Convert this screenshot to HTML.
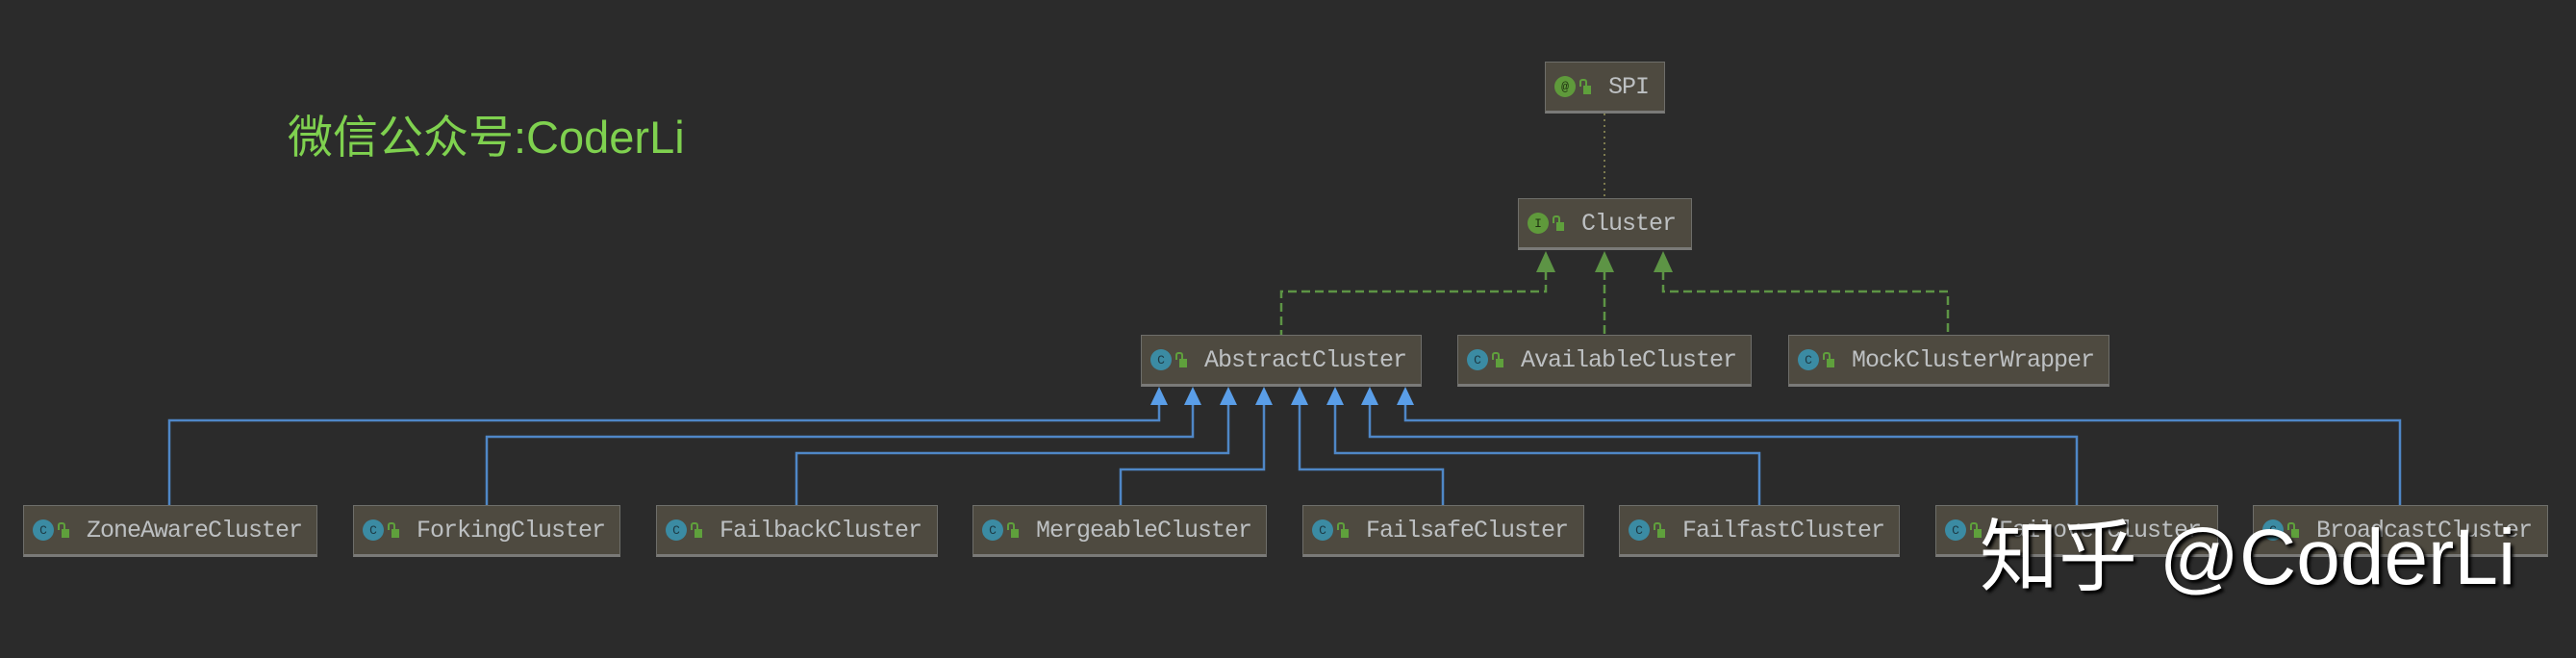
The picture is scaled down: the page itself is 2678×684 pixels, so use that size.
<!DOCTYPE html>
<html><head><meta charset="utf-8"><style>
body{margin:0;width:2678px;height:684px;background:#2b2b2b;position:relative;overflow:hidden;font-family:"Liberation Mono",monospace}
.b{position:absolute;height:51px;background:#4e4a40;border:1px solid #6e6e6a;border-bottom:3px solid #7a7a78;box-sizing:border-box;display:flex;align-items:center;color:#bdc0c2;font-size:25px;letter-spacing:-1px;white-space:nowrap}
.ic{width:22px;height:22px;border-radius:50%;background:#3b8ba3;color:#1d3a45;font-size:13px;letter-spacing:0;display:flex;align-items:center;justify-content:center;margin-left:9px;flex:none}
.gi{background:#5f9a3b;color:#1f3010}
.lk{width:8px;height:9px;background:#5fa03c;margin:6px 18px 0 8px;position:relative;flex:none}
.lk:before{content:"";position:absolute;left:-4px;top:-7px;width:4px;height:6px;border:2px solid #5fa03c;border-bottom:none;border-radius:3px 3px 0 0}
.wm{position:absolute;left:299px;top:104px;font-family:"Liberation Sans","Noto Sans CJK SC",sans-serif;font-size:47px;color:#7fd14f}
.zh{position:absolute;left:2058px;top:512px;font-family:"Liberation Sans","Noto Sans CJK SC",sans-serif;font-size:82px;color:#fff;text-shadow:3px 3px 3px #000;white-space:nowrap}
</style></head><body>
<svg width="2678" height="684" style="position:absolute;left:0;top:0">
<line x1="1668" y1="118" x2="1668" y2="206" stroke="#7c7a4e" stroke-width="2" stroke-dasharray="2,4"/>
<g stroke="#5d9445" stroke-width="2.5" fill="none" stroke-dasharray="9,5">
<polyline points="1607,282 1607,303 1332,303 1332,348"/>
<polyline points="1668,282 1668,348"/>
<polyline points="1729,282 1729,303 2025,303 2025,348"/>
</g>
<g fill="#5d9445">
<polygon points="1607,261 1597,283 1617,283"/>
<polygon points="1668,261 1658,283 1678,283"/>
<polygon points="1729,261 1719,283 1739,283"/>
</g>
<g stroke="#4f87c7" stroke-width="2.5" fill="none">
<polyline points="1205,420 1205,437 176,437 176,525"/>
<polyline points="1240,420 1240,454 506,454 506,525"/>
<polyline points="1277,420 1277,471 828,471 828,525"/>
<polyline points="1314,420 1314,488 1165,488 1165,525"/>
<polyline points="1351,420 1351,488 1500,488 1500,525"/>
<polyline points="1388,420 1388,471 1829,471 1829,525"/>
<polyline points="1424,420 1424,454 2159,454 2159,525"/>
<polyline points="1461,420 1461,437 2495,437 2495,525"/>
</g>
<g fill="#5a9ee8">
<polygon points="1205,402 1196,421 1214,421"/><polygon points="1240,402 1231,421 1249,421"/>
<polygon points="1277,402 1268,421 1286,421"/><polygon points="1314,402 1305,421 1323,421"/>
<polygon points="1351,402 1342,421 1360,421"/><polygon points="1388,402 1379,421 1397,421"/>
<polygon points="1424,402 1415,421 1433,421"/><polygon points="1461,402 1452,421 1470,421"/>
</g>
</svg>
<div class="wm">微信公众号:CoderLi</div>
<div class="b" style="left:1606px;top:64px;width:125px;height:54px"><span class="ic gi">@</span><span class="lk"></span>SPI</div>
<div class="b" style="left:1578px;top:206px;width:181px;height:54px"><span class="ic gi">I</span><span class="lk"></span>Cluster</div>
<div class="b" style="left:1186px;top:348px;width:292px;height:54px"><span class="ic">C</span><span class="lk"></span>AbstractCluster</div>
<div class="b" style="left:1515px;top:348px;width:306px;height:54px"><span class="ic">C</span><span class="lk"></span>AvailableCluster</div>
<div class="b" style="left:1859px;top:348px;width:334px;height:54px"><span class="ic">C</span><span class="lk"></span>MockClusterWrapper</div>
<div class="b" style="left:24px;top:525px;width:306px;height:54px"><span class="ic">C</span><span class="lk"></span>ZoneAwareCluster</div>
<div class="b" style="left:367px;top:525px;width:278px;height:54px"><span class="ic">C</span><span class="lk"></span>ForkingCluster</div>
<div class="b" style="left:682px;top:525px;width:293px;height:54px"><span class="ic">C</span><span class="lk"></span>FailbackCluster</div>
<div class="b" style="left:1011px;top:525px;width:306px;height:54px"><span class="ic">C</span><span class="lk"></span>MergeableCluster</div>
<div class="b" style="left:1354px;top:525px;width:293px;height:54px"><span class="ic">C</span><span class="lk"></span>FailsafeCluster</div>
<div class="b" style="left:1683px;top:525px;width:292px;height:54px"><span class="ic">C</span><span class="lk"></span>FailfastCluster</div>
<div class="b" style="left:2012px;top:525px;width:294px;height:54px"><span class="ic">C</span><span class="lk"></span>FailoverCluster</div>
<div class="b" style="left:2342px;top:525px;width:307px;height:54px"><span class="ic">C</span><span class="lk"></span>BroadcastCluster</div>
<div class="zh">知乎 @CoderLi</div>
</body></html>
